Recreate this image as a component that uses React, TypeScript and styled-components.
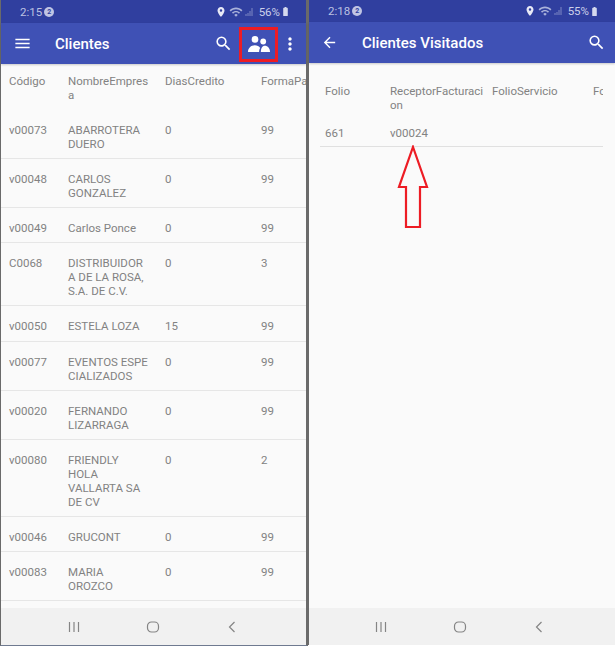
import React from 'react';
import styled, { createGlobalStyle } from 'styled-components';
import { MdArrowBack, MdBatteryFull, MdLocationOn, MdMenu, MdMoreVert, MdSearch, MdWifi } from 'react-icons/md';

const clientes = [
  ['v00073', 'ABARROTERA\nDUERO', '0', '99'],
  ['v00048', 'CARLOS\nGONZALEZ', '0', '99'],
  ['v00049', 'Carlos Ponce', '0', '99'],
  ['C0068', 'DISTRIBUIDOR\nA DE LA ROSA,\nS.A. DE C.V.', '0', '3'],
  ['v00050', 'ESTELA LOZA', '15', '99'],
  ['v00077', 'EVENTOS ESPE\nCIALIZADOS', '0', '99'],
  ['v00020', 'FERNANDO\nLIZARRAGA', '0', '99'],
  ['v00080', 'FRIENDLY\nHOLA\nVALLARTA SA\nDE CV', '0', '2'],
  ['v00046', 'GRUCONT', '0', '99'],
  ['v00083', 'MARIA\nOROZCO', '0', '99'],
];

function StatusBar({ time, battery, height }: { time: string; battery: string; height: number }) {
  return (
    <Status $height={height}>
      <Clock>{time}</Clock>
      <Badge>2</Badge>
      <StatusRight>
        <MdLocationOn size={12} color="#e8eaf6" />
        <MdWifi size={14} color="#aab2da" />
        <svg width="9" height="10" viewBox="0 0 9 10">
          <path d="M1 7v2M3 6v3M5 4v5M7 1v8" stroke="#7f89c4" strokeWidth="1" />
        </svg>
        <Percent>{battery}</Percent>
        <MdBatteryFull size={11} color="#d5d9ee" />
      </StatusRight>
    </Status>
  );
}

function NavBar({ shift }: { shift: number }) {
  return (
    <Nav $shift={shift}>
      <svg width="14" height="12" viewBox="0 0 14 12">
        <path d="M2.500 1v10M7 1v10M11.500 1v10" stroke="#858585" strokeWidth="1.200" />
      </svg>
      <svg width="14" height="12" viewBox="0 0 14 12">
        <rect x="1.500" y="1" width="11" height="10" rx="4" fill="none" stroke="#858585" strokeWidth="1.200" />
      </svg>
      <svg width="14" height="12" viewBox="0 0 14 12">
        <path d="M9.500 1 4.500 6l5 5" fill="none" stroke="#858585" strokeWidth="1.200" />
      </svg>
    </Nav>
  );
}

export default function App() {
  return (
    <Page>
      <GlobalStyle />
      <Phone>
        <StatusBar time="2:15" battery="56%" height={23} />
        <AppBar>
          <MdMenu size={19} />
          <Title $gap={23}>Clientes</Title>
          <Actions $inset={0}>
            <MdSearch size={19} />
            <PeopleAction>
              <svg width="22" height="16" viewBox="0 0 22 16" fill="#ffffff">
                <circle cx="7" cy="3.400" r="3.300" />
                <circle cx="15.200" cy="5.500" r="2.900" />
                <path d="M0 16c0-4 3-6.800 6.800-6.800 2.400 0 4.300 1 5.400 2.700-.7 1-1.100 2.500-1.100 4.100Z" />
                <path d="M12.800 16c0-3.600 1.500-6.200 4-6.200 3 0 5.200 2.600 5.200 6.200Z" />
              </svg>
              <Highlight />
            </PeopleAction>
            <MdMoreVert size={20} />
          </Actions>
        </AppBar>
        <Content>
          <ClientRow $header>
            <Cell>Código</Cell>
            <Cell>{'NombreEmpres\na'}</Cell>
            <Cell>DiasCredito</Cell>
            <Cell>FormaPago</Cell>
          </ClientRow>
          {clientes.map((c) => (
            <ClientRow key={c[0]}>
              {c.map((v, i) => (
                <Cell key={i}>{v}</Cell>
              ))}
            </ClientRow>
          ))}
        </Content>
        <NavBar shift={2} />
      </Phone>
      <Phone $second>
        <StatusBar time="2:18" battery="55%" height={22} />
        <AppBar>
          <MdArrowBack size={17} />
          <Title $gap={24}>Clientes Visitados</Title>
          <Actions $inset={3}>
            <MdSearch size={19} />
          </Actions>
        </AppBar>
        <Content>
          <VisitTable>
            <VisitRow $header>
              <Cell>Folio</Cell>
              <Cell>{'ReceptorFacturaci\non'}</Cell>
              <Cell>FolioServicio</Cell>
              <Cell>FolioCliente</Cell>
            </VisitRow>
            <VisitRow>
              <Cell>661</Cell>
              <Cell>v00024</Cell>
            </VisitRow>
            <Arrow width="32" height="84" viewBox="0 0 32 84">
              <path d="M16 2 30 42H23V82H9V42H2Z" fill="none" stroke="#ed1c24" strokeWidth="2.200" />
            </Arrow>
          </VisitTable>
        </Content>
        <NavBar shift={5} />
      </Phone>
    </Page>
  );
}

const GlobalStyle = createGlobalStyle`
  html, body {
    margin: 0;
    background: #ffffff;
  }
`;

const Page = styled.div`
  display: flex;
  width: 615px;
  height: 646px;
  overflow: hidden;
  font-family: Roboto, "Liberation Sans", sans-serif;
`;

const Phone = styled.div<{ $second?: boolean }>`
  display: flex;
  flex-direction: column;
  box-sizing: border-box;
  width: ${(p) => (p.$second ? '307px' : '308px')};
  height: ${(p) => (p.$second ? '645px' : '646px')};
  border-left: 1px solid #6a6a6a;
  border-right: ${(p) => (p.$second ? '0' : '2px')} solid #6a6a6a;
  border-bottom: ${(p) => (p.$second ? '0' : '1px solid #6f7a90')};
`;

const Status = styled.div<{ $height: number }>`
  display: flex;
  align-items: center;
  flex: none;
  height: ${(p) => p.$height}px;
  padding: 0 15px 0 19px;
  background: #303f9f;
  color: #bcc2e2;
  font-size: 11.500px;
`;

const Clock = styled.span`
  margin-right: 2px;
`;

const Badge = styled.span`
  display: flex;
  align-items: center;
  justify-content: center;
  width: 10px;
  height: 10px;
  border-radius: 50%;
  background: #c0c5e4;
  color: #303f9f;
  font-size: 7px;
  font-weight: 700;
`;

const StatusRight = styled.div`
  display: flex;
  align-items: center;
  gap: 2px;
  margin-left: auto;
`;

const Percent = styled.span`
  margin: 0 -2px 0 3px;
  color: #ccd0ea;
`;

const AppBar = styled.div`
  display: flex;
  align-items: center;
  flex: none;
  height: 41px;
  padding: 0 6px 0 12px;
  background: #3f51b5;
  color: #ffffff;
  box-shadow: 0 1px 2px rgba(0, 0, 0, 0.2);
  z-index: 1;
`;

const Title = styled.div<{ $gap: number }>`
  margin-left: ${(p) => p.$gap}px;
  font-size: 15px;
  font-weight: 500;
`;

const Actions = styled.div<{ $inset: number }>`
  display: flex;
  align-items: center;
  margin-left: auto;
  padding-right: ${(p) => p.$inset}px;
`;

const PeopleAction = styled.div`
  position: relative;
  display: flex;
  margin: 0 10px 0 15px;
`;

const Highlight = styled.div`
  position: absolute;
  top: -9px;
  left: -9px;
  box-sizing: border-box;
  width: 39px;
  height: 35px;
  border: 3px solid #ed1c24;
`;

const Content = styled.div`
  flex: 1;
  min-height: 0;
  overflow: hidden;
  background: #fafafa;
  color: #828282;
  font-size: 11.500px;
  line-height: 14px;
`;

const Cell = styled.div`
  white-space: pre;
`;

const ClientRow = styled.div<{ $header?: boolean }>`
  display: grid;
  grid-template-columns: 59px 97px 96px 1fr;
  padding: ${(p) => (p.$header ? '10px 0 8px 8px' : '13px 0 7.110px 8px')};
  border-bottom: ${(p) => (p.$header ? '0' : '1px solid #e6e6e6')};
  overflow: hidden;
`;

const VisitTable = styled.div`
  position: relative;
  margin: 21px 12px 0 11px;
`;

const VisitRow = styled.div<{ $header?: boolean }>`
  display: grid;
  grid-template-columns: 65px 102px 101px 1fr;
  padding: ${(p) => (p.$header ? '0 0 1px 5px' : '13px 0 6px 5px')};
  border-bottom: ${(p) => (p.$header ? '0' : '1px solid #e0e0e0')};
  overflow: hidden;
`;

const Arrow = styled.svg`
  position: absolute;
  top: 61px;
  left: 77px;
`;

const Nav = styled.div<{ $shift: number }>`
  display: flex;
  align-items: center;
  justify-content: center;
  gap: 65px;
  flex: none;
  height: 37px;
  padding-right: ${(p) => p.$shift}px;
  background: #f1f1f1;
`;
